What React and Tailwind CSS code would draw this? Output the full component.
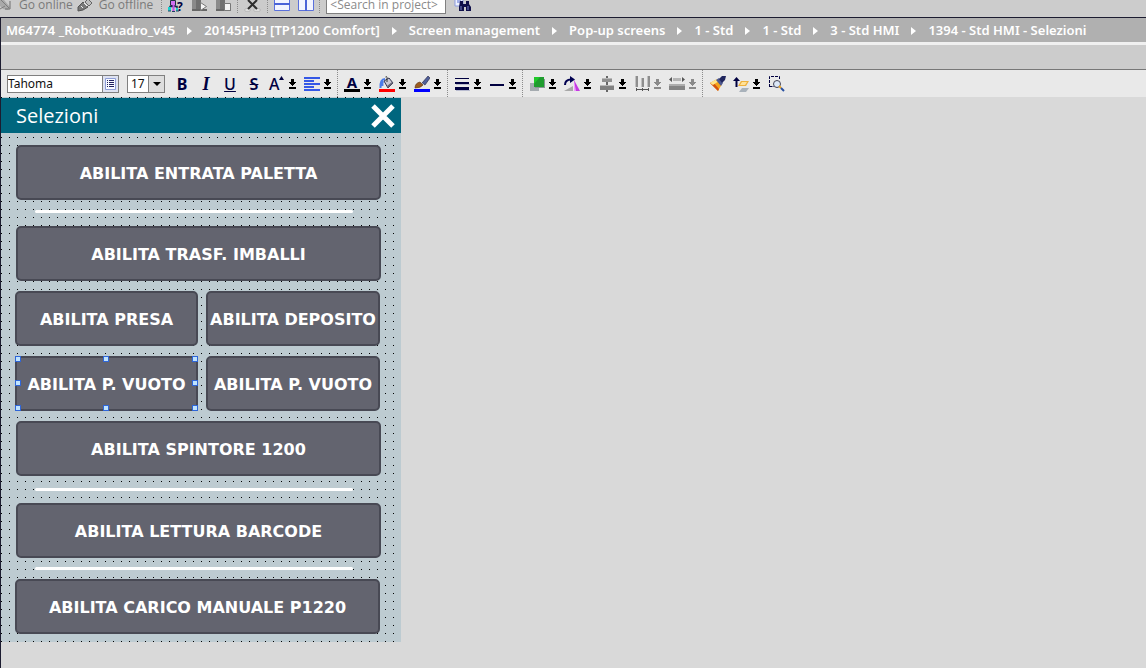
import React from "react";

const ui = "font-['Noto_Sans',sans-serif]";

function Icon({ w = 16, h = 16, children }) {
  return (
    <svg width={w} height={h} viewBox={`0 0 ${w} ${h}`} className="block shrink-0" aria-hidden="true">
      {children}
    </svg>
  );
}

function Sep() {
  return <span className="mr-1.5 ml-[5px] w-px shrink-0 self-stretch border-l border-dotted border-[#8c8c8c]" />;
}

function Tool({ label, children }) {
  return (
    <button type="button" aria-label={label} className="block shrink-0">
      {children}
    </button>
  );
}

function Drop({ label, disabled = false, children }) {
  const c = disabled ? "#8a8a8a" : "#000";
  return (
    <div className="flex shrink-0 items-center gap-1">
      <button type="button" aria-label={label} disabled={disabled}>
        {children}
      </button>
      <button type="button" aria-label={`${label} options`} disabled={disabled}>
        <Icon w={8} h={10}>
          <path d="M2 0h3v3h2v1h-1v1h-1v1h-1v1h-1v-1h-1v-1h-1v-1h-1v-1h2zM0 8h7v2H0z" fill={c} />
        </Icon>
      </button>
    </div>
  );
}

function TopBar() {
  return (
    <div className="flex h-[17px] items-end overflow-hidden bg-[#cccccc] pb-1 font-['Open_Sans',sans-serif] text-[12px] text-[#7a7a7a]">
      <button type="button" className="flex items-end gap-2">
        <Icon w={11}>
          <path d="M0 3 L4 3 L10 10 L8 13 L3 12 L0 9z" fill="#a9a9a9" />
          <path d="M1 3 L9 11 M0 12 L5 9" stroke="#7d7d7d" fill="none" />
          <path d="M10 4v8h-5" stroke="#6f6f6f" fill="none" />
        </Icon>
        <span className="leading-4">Go online</span>
      </button>
      <button type="button" className="ml-1 flex items-end gap-1.5">
        <Icon>
          <path d="M1 14 L1 10 L6 5 L11 10 L6 13z" fill="#777" stroke="#555" />
          <path d="M8 5 L11 2 L15 6 L12 9z" fill="#bdbdbd" stroke="#666" />
          <path d="M4 9l2 2M7 6l3 3" stroke="#eee" />
        </Icon>
        <span className="leading-4">Go offline</span>
      </button>
      <div className="ml-[3px] flex h-4 items-end">
        <Sep />
        <div className="flex gap-2">
          <Tool label="Accessible devices">
            <Icon>
              <path d="M2.500 3.500h5v5h-5z" fill="#d070f0" stroke="#203040" />
              <path d="M2 14v-4.500h7V14" stroke="#1a2a50" strokeWidth="1.500" fill="none" />
              <path d="M5.500 8v6" stroke="#c050e8" strokeWidth="2" />
              <path d="M0 10h3v4H0zM8 11h2v3H8z" fill="#18d0d0" />
              <path d="M0 14h3M8 14h3M4 14.500h3" stroke="#204060" />
              <text x="9" y="14" fontSize="12" fontWeight="bold" fontFamily="Noto Sans" fill="#000040">?</text>
            </Icon>
          </Tool>
          <Tool label="Start simulation">
            <Icon>
              <path d="M0 0h4v12H0z" fill="#8a8a8a" />
              <path d="M4 0h5v12H4z" fill="#707070" />
              <path d="M0 12h15v2H0z" fill="#666" />
              <path d="M8.500 5.500v8l6-4z" fill="#f4f4f4" stroke="#777" />
            </Icon>
          </Tool>
          <Tool label="Stop simulation">
            <Icon>
              <path d="M0 0h4v12H0z" fill="#8a8a8a" />
              <path d="M4 0h5v12H4z" fill="#707070" />
              <path d="M0 12h15v2H0z" fill="#666" />
              <path d="M8.500 6.500h6v7h-6z" fill="#f4f4f4" stroke="#777" />
            </Icon>
          </Tool>
        </div>
        <Sep />
        <Tool label="Cross-references">
          <Icon w={18}>
            <path d="M1 12h5v2H1zM10 12h6v2h-6z" fill="#f2f2f2" stroke="#999" strokeWidth=".5" />
            <path d="M4 3l9 9M13 3l-9 9" stroke="#2e2e2e" strokeWidth="2" />
          </Icon>
        </Tool>
        <Sep />
        <div className="flex gap-2">
          <Tool label="Split editor horizontally">
            <Icon>
              <path d="M.5 0v13.500h15V0" fill="#f2f4ff" stroke="#5a70dc" />
              <path d="M0 7h16" stroke="#4a63d8" strokeWidth="2" />
            </Icon>
          </Tool>
          <Tool label="Split editor vertically">
            <Icon>
              <path d="M.5 0v13.500h15V0" fill="#f2f4ff" stroke="#5a70dc" />
              <path d="M8 0v14" stroke="#4a63d8" strokeWidth="2" />
            </Icon>
          </Tool>
        </div>
        <Sep />
      </div>
      <input
        aria-label="Search in project"
        placeholder="<Search in project>"
        className="-mb-px h-5 w-[120px] shrink-0 border border-[#808080] bg-white px-[3px] leading-4 placeholder:text-[#8a8a8a]"
      />
      <div className="ml-2">
        <Tool label="Search">
          <Icon w={18}>
            <path d="M1 0h8v9H1z" fill="#eef2ff" stroke="#8c9be0" />
            <path d="M3 3h4M3 5h4" stroke="#5a6fd0" />
            <path d="M6 4h3v3h3V4h3v3l2 3v4h-5v-4h-2v4H5v-4z" fill="#10104a" />
            <path d="M7 9v4M14 9v4" stroke="#7a86c8" />
          </Icon>
        </Tool>
      </div>
    </div>
  );
}

const crumbs = [
  "M64774 _RobotKuadro_v45",
  "20145PH3 [TP1200 Comfort]",
  "Screen management",
  "Pop-up screens",
  "1 - Std",
  "1 - Std",
  "3 - Std HMI",
  "1394 - Std HMI - Selezioni",
];

function Breadcrumb() {
  return (
    <nav aria-label="Breadcrumb" className="border-b-[3px] border-[#f0f0f0] bg-[#b0b0b0]">
      <ol className="flex h-6 items-center gap-3 pt-px pl-[5px] text-[13px] font-semibold whitespace-nowrap text-white">
        {crumbs.map((c, i) => (
          <li key={i} className="flex items-center gap-3">
            {i > 0 && (
              <Icon w={5} h={8}>
                <path d="M0 0 L5 4 L0 8z" fill="#fff" />
              </Icon>
            )}
            <a href="#">{c}</a>
          </li>
        ))}
      </ol>
    </nav>
  );
}

const letter = "block text-center text-[#000040] leading-4";

function FormatBar() {
  return (
    <div className="flex h-7 items-center overflow-hidden border-t border-[#777777] bg-[#e9e9e9] pl-1.5">
      <div className="flex h-[18px] w-28 shrink-0 border border-[#808080] bg-white">
        <input aria-label="Font" defaultValue="Tahoma" className="w-[94px] text-[12px] leading-4 text-[#101010]" />
        <button type="button" aria-label="Choose font" className="flex flex-1 items-center justify-center border-l border-[#808080] bg-[#dfe3f2]">
          <Icon w={11} h={12}>
            <path d="M.5.5h10v11H.5z" fill="#f8faff" stroke="#8f9fd8" />
            <path d="M2 2.500h1M4 2.500h5M2 4.500h1M4 4.500h5M2 6.500h1M4 6.500h5M2 8.500h1M4 8.500h5" stroke="#202060" />
          </Icon>
        </button>
      </div>
      <div className="relative ml-2 h-[18px] w-[38px] shrink-0 border border-[#808080] bg-white">
        <select aria-label="Font size" className="block h-4 w-full appearance-none pl-[3px] text-[12px] leading-4 text-[#101010]">
          <option>17</option>
        </select>
        <span className="pointer-events-none absolute inset-y-0 right-0 flex w-4 items-center justify-center border-l border-[#808080] bg-[#dedede]">
          <Icon w={8} h={4}>
            <path d="M0 0h8L4 4z" fill="#000" />
          </Icon>
        </span>
      </div>
      <div className="ml-[5px] flex shrink-0">
        <button type="button" aria-label="Bold" className={`${letter} w-6 text-[16px] font-bold`}>B</button>
        <button type="button" aria-label="Italic" className={`${letter} w-6 font-['Liberation_Serif',serif] text-[18px] font-bold italic`}>I</button>
        <button type="button" aria-label="Underline" className={`${letter} w-6 text-[16px] font-medium underline`}>U</button>
        <button type="button" aria-label="Strikethrough" className={`${letter} w-6 text-[16px] font-semibold line-through`}>S</button>
      </div>
      <div className="ml-[3px] flex gap-[7px]">
        <Drop label="Font size step">
          <span className={`${letter} flex w-4 text-[16px] font-medium`}>
            A
            <Icon w={5} h={4}>
              <path d="M0 4 L2.500 0 L5 4z" fill="#000040" />
            </Icon>
          </span>
        </Drop>
        <Drop label="Text alignment">
          <Icon>
            <path d="M0 2h16M0 5h10M0 8h16M0 11h10M0 14h16" stroke="#3558e6" strokeWidth="2" />
          </Icon>
        </Drop>
      </div>
      <Sep />
      <div className="flex gap-[7px]">
        <Drop label="Text colour">
          <span className={`${letter} h-4 w-4 border-b-[3px] border-black text-[15px] leading-[13px] font-bold`}>A</span>
        </Drop>
        <Drop label="Background colour">
          <Icon>
            <path d="M0 13h16v3H0z" fill="#f00" />
            <path d="M5 5 L10 2 L14 7 L9 12z" fill="#c8c8d4" stroke="#333350" />
            <path d="M8 10l5-4 1 1-5 5z" fill="#666678" />
            <path d="M8 6V1.500Q8 0 6.500 1" stroke="#333" fill="none" />
            <path d="M6 3Q1 3 1.500 12M4 5Q3 7 3.500 10" stroke="#4a7ae8" strokeWidth="2" fill="none" />
          </Icon>
        </Drop>
        <Drop label="Line colour">
          <Icon>
            <path d="M0 13h16v3H0z" fill="#00f" />
            <path d="M8 7L14 0l2 2-5 7z" fill="#50609a" stroke="#202040" strokeWidth=".6" />
            <path d="M7 6l3 3-2 1-2-3z" fill="#ddd" />
            <path d="M1 12Q1 7 6 6l3 3Q7 12 1 12z" fill="#9a5c20" stroke="#5a3210" strokeWidth=".6" />
          </Icon>
        </Drop>
      </div>
      <Sep />
      <div className="flex gap-[7px]">
        <Drop label="Line width">
          <Icon>
            <path d="M1 2.500h14" stroke="#000040" />
            <path d="M1 7h14" stroke="#000040" strokeWidth="2" />
            <path d="M1 12.500h14" stroke="#000040" strokeWidth="3" />
            <path d="M2 8.500h14M2 14.500h14" stroke="#b9bcd0" />
          </Icon>
        </Drop>
        <Drop label="Line style">
          <Icon>
            <path d="M1 9h14" stroke="#000040" strokeWidth="2" />
          </Icon>
        </Drop>
      </div>
      <Sep />
      <div className="flex gap-[7px]">
        <Drop label="Arrange">
          <Icon>
            <path d="M1 7h9v8H1z" fill="#a5abb0" />
            <path d="M6 3h10v9H6z" fill="#8a9494" />
            <path d="M5 1h10v10H5z" fill="#1f9c2e" />
            <path d="M5 1h6L5 8z" fill="#20c92a" />
          </Icon>
        </Drop>
        <Drop label="Rotate">
          <Icon>
            <path d="M0 15L9 10v5z" fill="#a8a8a8" />
            <path d="M10 4v11h6z" fill="#c33be0" />
            <path d="M10 4v11h2z" fill="#f09aff" />
            <path d="M1 9Q1 3.500 7 3.500" stroke="#000050" strokeWidth="2" fill="none" />
            <path d="M6 0l5 3.500-5 3.500z" fill="#000050" />
          </Icon>
        </Drop>
        <Drop label="Align">
          <Icon>
            <path d="M7 0h2v16H7z" fill="#666" />
            <path d="M3 2h10v4H3z" fill="#909090" />
            <path d="M1 9h14v5H1z" fill="#808080" />
            <path d="M3 2h10v1H3zM1 9h14v1H1z" fill="#b8b8b8" />
          </Icon>
        </Drop>
        <Drop label="Distribute" disabled>
          <Icon>
            <path d="M1 0h3v11H1zM7 2h3v9H7zM13 0h3v11h-3z" fill="#8e8e8e" />
            <path d="M1 0h1v11H1zM7 2h1v9H7zM13 0h1v11h-1z" fill="#c0c0c0" />
            <path d="M2 13.500h13M2.500 12v3M8.500 12v3M14.500 12v3" stroke="#555" />
          </Icon>
        </Drop>
        <Drop label="Match size" disabled>
          <Icon>
            <path d="M4 2h8v3H4z" fill="#b5b5b5" />
            <path d="M3 1v5L0 3.500zM13 1v5l3-2.500z" fill="#555" />
            <path d="M0 8h16v6H0z" fill="#858585" />
            <path d="M0 8h16v2H0z" fill="#adadad" />
          </Icon>
        </Drop>
      </div>
      <Sep />
      <div className="flex items-center gap-[7px]">
        <Tool label="Format painter">
          <Icon w={17}>
            <path d="M1 7L8 3l5 5-4 7z" fill="#f5a41c" />
            <path d="M1 7l3-1 6 7-1 2z" fill="#d4500f" />
            <path d="M1 7L8 3l2 2-6 4z" fill="#ffe58a" />
            <path d="M7 4l3-2 4 5-2 3z" fill="#4d5890" />
            <path d="M10 3l3-3 4 0-1 4-3 3z" fill="#20265e" />
          </Icon>
        </Tool>
        <Drop label="Layer">
          <Icon>
            <path d="M0 5l3.500-4L7 5H4.500v6h-2V5z" fill="#000040" />
            <path d="M6 16l3-4h7l-3 4z" fill="#a9b2bb" />
            <path d="M5 10l3-5h8l-3 5z" fill="#eeb13e" />
            <path d="M7 9l2-3h5l-2 3z" fill="#ffe29a" />
          </Icon>
        </Drop>
        <Tool label="Zoom to selection">
          <Icon w={18}>
            <path d="M1.500 11V.5h10V4M1.500 10.500H6" stroke="#000040" strokeDasharray="3 1" fill="none" />
            <circle cx="9" cy="8" r="3.500" fill="#dce8f8" stroke="#445" />
            <path d="M11 10l2 2" stroke="#e8a020" strokeWidth="2" />
            <path d="M13 12l3 3" stroke="#2850a0" strokeWidth="2" />
          </Icon>
        </Tool>
      </div>
    </div>
  );
}

function Handle({ at }) {
  return <span className={`absolute size-1.5 border border-[#2f66d8] bg-[#bfe3ff] ${at}`} />;
}

const handles = [
  "-top-0.5 -left-0.5",
  "-top-0.5 left-[86px]",
  "-top-0.5 -right-0.5",
  "top-[22px] -left-0.5",
  "top-[22px] -right-0.5",
  "-bottom-0.5 -left-0.5",
  "-bottom-0.5 left-[86px]",
  "-bottom-0.5 -right-0.5",
];

function HmiButton({ children, selected = false }) {
  return (
    <button
      type="button"
      className="relative flex h-[55px] w-full items-center justify-center rounded-[5px] border-2 border-[#484954] bg-[#63646f] pt-0.5 font-['DejaVu_Sans',sans-serif] text-[16px] font-bold whitespace-nowrap text-white"
    >
      {children}
      {selected && handles.map((h) => <Handle key={h} at={h} />)}
    </button>
  );
}

function Rule({ m }) {
  return <hr className={`ml-[19px] h-[3px] w-[318px] rounded-full border-0 bg-white ${m}`} />;
}

function Panel() {
  return (
    <section className="w-[400px] bg-[#bdcbd1] bg-[conic-gradient(from_270deg_at_1px_1px,#000_90deg,transparent_0)] bg-size-[8px_8px] pt-px pb-2">
      <header className="flex h-[35px] items-center justify-between bg-[#00667e] pr-1.5 pl-[15px] text-white">
        <h1 className="font-['Open_Sans',sans-serif] text-[20px] leading-8">Selezioni</h1>
        <button type="button" aria-label="Close">
          <Icon w={24} h={24}>
            <path d="M2 2l20 20M22 2L2 22" stroke="#fff" strokeWidth="5" />
          </Icon>
        </button>
      </header>
      <div className="pt-3 pr-5 pl-[15px]">
        <HmiButton>ABILITA ENTRATA PALETTA</HmiButton>
        <Rule m="mt-2.5 mb-[13px]" />
        <HmiButton>ABILITA TRASF. IMBALLI</HmiButton>
        <div className="-ml-px grid grid-cols-[183px_174px] gap-x-2 gap-y-2.5 py-2.5">
          <HmiButton>ABILITA PRESA</HmiButton>
          <HmiButton>ABILITA DEPOSITO</HmiButton>
          <HmiButton selected>ABILITA P. VUOTO</HmiButton>
          <HmiButton>ABILITA P. VUOTO</HmiButton>
        </div>
        <HmiButton>ABILITA SPINTORE 1200</HmiButton>
        <Rule m="my-3" />
        <HmiButton>ABILITA LETTURA BARCODE</HmiButton>
        <Rule m="my-[9px]" />
        <div className="-ml-px pr-px">
          <HmiButton>ABILITA CARICO MANUALE P1220</HmiButton>
        </div>
      </div>
    </section>
  );
}

export default function App() {
  return (
    <div className={`flex min-h-screen flex-col bg-[#d9d9d9] ${ui}`}>
      <TopBar />
      <div className="flex flex-1 flex-col border-t border-l border-[#1c1c30]">
        <Breadcrumb />
        <div className="h-6 bg-[#cccccc]" />
        <FormatBar />
        <main className="flex-1">
          <Panel />
        </main>
      </div>
    </div>
  );
}
